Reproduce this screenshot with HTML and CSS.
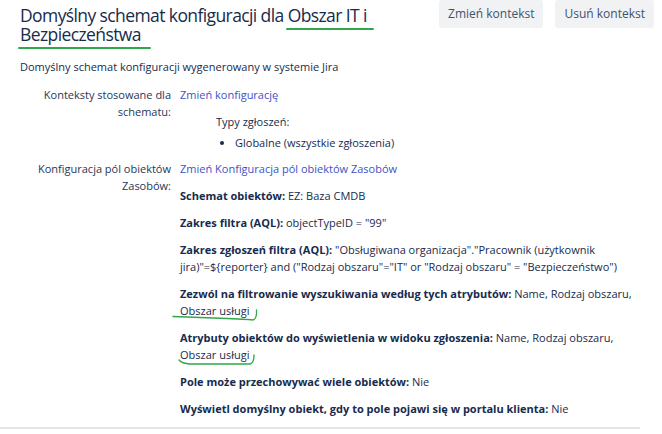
FILE: index.html
```html
<!DOCTYPE html>
<html lang="pl">
<head>
    <meta charset="UTF-8">
    <title>Domyślny schemat konfiguracji</title>
    <link rel="stylesheet" href="styles.css">
</head>
<body>
    <div class="page">
        <div class="header">
            <h2 class="title">Domyślny schemat konfiguracji dla <span class="mark mark-a">Obszar IT i</span> <span class="mark mark-b">Bezpieczeństwa</span></h2>
            <div class="actions">
                <button class="btn">Zmień kontekst</button>
                <button class="btn">Usuń kontekst</button>
            </div>
        </div>

        <p class="desc">Domyślny schemat konfiguracji wygenerowany w systemie Jira</p>

        <div class="props">
            <div class="label">Konteksty stosowane dla schematu:</div>
            <div class="value">
                <a href="#" class="link">Zmień konfigurację</a>
                <div class="types">
                    <div class="types-title">Typy zgłoszeń:</div>
                    <ul class="types-list">
                        <li>Globalne (wszystkie zgłoszenia)</li>
                    </ul>
                </div>
            </div>

            <div class="label">Konfiguracja pól obiektów Zasobów:</div>
            <div class="value">
                <a href="#" class="link">Zmień Konfiguracja pól obiektów Zasobów</a>
                <p><b>Schemat obiektów:</b> EZ: Baza CMDB</p>
                <p><b>Zakres filtra (AQL):</b> objectTypeID = "99"</p>
                <p><b>Zakres zgłoszeń filtra (AQL):</b> "Obsługiwana organizacja"."Pracownik (użytkownik jira)"=${reporter} and ("Rodzaj obszaru"="IT" or "Rodzaj obszaru" = "Bezpieczeństwo")</p>
                <p><b>Zezwól na filtrowanie wyszukiwania według tych atrybutów:</b> Name, Rodzaj obszaru, <span class="scribble">Obszar usługi<svg class="scribble-1" width="90" height="20" viewBox="0 0 90 20"><path d="M1 13.5 Q30 14.5 55 15.5 T81 17 Q85 16 84.5 7" /></svg></span></p>
                <p><b>Atrybuty obiektów do wyświetlenia w widoku zgłoszenia:</b> Name, Rodzaj obszaru, <span class="scribble">Obszar usługi<svg class="scribble-2" width="80" height="20" viewBox="0 0 80 20"><path d="M1 13 Q4 16.5 12 17 L72 17 Q76 16 76 8" /></svg></span></p>
                <p><b>Pole może przechowywać wiele obiektów:</b> Nie</p>
                <p><b>Wyświetl domyślny obiekt, gdy to pole pojawi się w portalu klienta:</b> Nie</p>
            </div>
        </div>
        <div class="rule"></div>
    </div>
</body>
</html>
```

FILE: styles.css
```css
body {
    margin: 0;
    font-family: "Open Sans", "Noto Sans", sans-serif;
    font-size: 11px;
    line-height: 17px;
    color: #172b4d;
    background: #fff;
}
.page {
    padding: 0 8px 0 20px;
}
.header {
    display: flex;
    justify-content: space-between;
    align-items: flex-start;
}
.title {
    margin: 6px 0 0;
    width: 390px;
    font-size: 17.5px;
    line-height: 19px;
    letter-spacing: -0.6px;
    font-weight: 400;
    color: #172b4d;
}
.mark {
    position: relative;
    white-space: nowrap;
}
.mark::after {
    content: "";
    position: absolute;
    height: 2px;
    background: #2ea84a;
    border-radius: 1px;
}
.mark-a::after {
    left: -2px;
    right: -7px;
    bottom: -3px;
}
.mark-b::after {
    left: -2px;
    right: -10px;
    bottom: -3px;
}
.actions {
    display: flex;
    gap: 12px;
}
.btn {
    font-family: inherit;
    font-size: 12px;
    line-height: 28px;
    height: 28px;
    padding: 0 9px;
    border: none;
    border-radius: 3px;
    background: #f1f2f4;
    color: #42526e;
}
.desc {
    margin: 14px 0 11px;
}
.props {
    display: grid;
    grid-template-columns: 151px 1fr;
    column-gap: 9px;
    row-gap: 9px;
}
.label {
    text-align: right;
    color: #253858;
}
.value p {
    margin: 10px 0 0;
}
.link {
    color: #4152c5;
    text-decoration: none;
}
.types {
    margin: 10px 0 0 36px;
}
.types-title {
    color: #172b4d;
}
.types-list {
    margin: 4px 0 0;
    padding-left: 19px;
}
.scribble {
    position: relative;
    white-space: nowrap;
}
.scribble svg {
    position: absolute;
    fill: none;
    stroke: #2ea84a;
    stroke-width: 1.3;
    stroke-linecap: round;
}
.scribble-1 {
    left: -8px;
    top: 0;
}
.scribble-2 {
    left: -2px;
    top: 0;
}
.rule {
    margin-top: 10px;
    height: 2px;
    background: #e4e5e8;
    width: 640px;
    margin-left: -20px;
}
```
